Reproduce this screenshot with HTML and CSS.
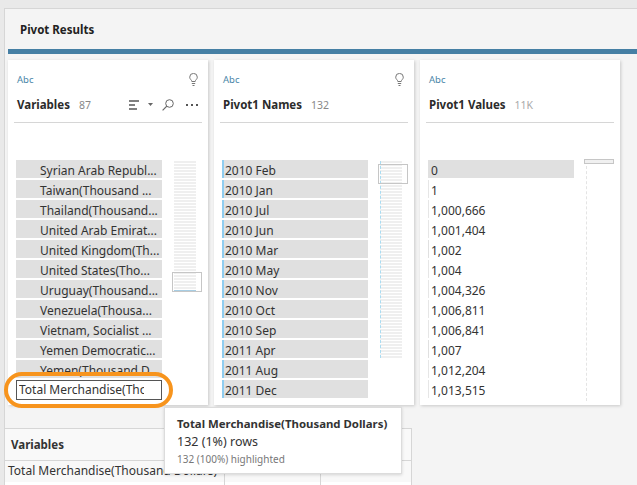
FILE: index.html
```html
<!DOCTYPE html>
<html lang="en">
<head>
    <meta charset="UTF-8">
    <title>Pivot Results</title>
    <link rel="stylesheet" href="styles.css">
</head>
<body>
    <div class="panel">
        <h1 class="panel-title">Pivot Results</h1>
        <div class="accent-bar"></div>
        <div class="cards">
            <div class="card">
                <div class="type-row">
                    <span class="type">Abc</span>
                    <svg class="bulb" width="9" height="13" viewBox="0 0 9 13"><path d="M2.800 8.500C2.800 7 .7 6.200 .7 4.200A3.800 3.800 0 0 1 8.300 4.200C8.300 6.200 6.200 7 6.200 8.500ZM2.800 10.500H6.200M3.500 12.500H5.500" fill="none" stroke="#777" stroke-width="1"/></svg>
                </div>
                <div class="name-row">
                    <span class="field-name">Variables</span>
                    <span class="count">87</span>
                    <span class="tools">
                        <svg width="10" height="10" viewBox="0 0 10 10"><path d="M0 1h10M0 5h6M0 9h8" stroke="#555" stroke-width="1.600"/></svg>
                        <svg class="caret" width="5" height="3" viewBox="0 0 5 3"><path d="M0 0h5L2.500 3z" fill="#666"/></svg>
                        <svg class="glass" width="12" height="12" viewBox="0 0 12 12"><circle cx="7.500" cy="4.500" r="3.800" fill="none" stroke="#666"/><path d="M4.800 7.200L.6 11.400" stroke="#666" stroke-width="1.200"/></svg>
                        <svg class="dots" width="12" height="2" viewBox="0 0 12 2"><path d="M0 0h2v2H0zM5 0h2v2H5zM10 0h2v2h-2z" fill="#555"/></svg>
                    </span>
                </div>
                <div class="profile">
                    <div class="rows indented">
                        <div class="row">Syrian Arab Republ...</div>
                        <div class="row">Taiwan(Thousand ...</div>
                        <div class="row">Thailand(Thousand...</div>
                        <div class="row">United Arab Emirat...</div>
                        <div class="row">United Kingdom(Th...</div>
                        <div class="row">United States(Tho...</div>
                        <div class="row">Uruguay(Thousand...</div>
                        <div class="row">Venezuela(Thousa...</div>
                        <div class="row">Vietnam, Socialist ...</div>
                        <div class="row">Yemen Democratic...</div>
                        <div class="row">Yemen(Thousand D...</div>
                    </div>
                    <div class="minimap minimap-first">
                        <div class="viewport viewport-first"></div>
                    </div>
                </div>
            </div>
            <div class="card">
                <div class="type-row">
                    <span class="type">Abc</span>
                    <svg class="bulb" width="9" height="13" viewBox="0 0 9 13"><path d="M2.800 8.500C2.800 7 .7 6.200 .7 4.200A3.800 3.800 0 0 1 8.300 4.200C8.300 6.200 6.200 7 6.200 8.500ZM2.800 10.500H6.200M3.500 12.500H5.500" fill="none" stroke="#777" stroke-width="1"/></svg>
                </div>
                <div class="name-row">
                    <span class="field-name">Pivot1 Names</span>
                    <span class="count">132</span>
                </div>
                <div class="profile">
                    <div class="rows marked">
                        <div class="row">2010 Feb</div>
                        <div class="row">2010 Jan</div>
                        <div class="row">2010 Jul</div>
                        <div class="row">2010 Jun</div>
                        <div class="row">2010 Mar</div>
                        <div class="row">2010 May</div>
                        <div class="row">2010 Nov</div>
                        <div class="row">2010 Oct</div>
                        <div class="row">2010 Sep</div>
                        <div class="row">2011 Apr</div>
                        <div class="row">2011 Aug</div>
                        <div class="row">2011 Dec</div>
                    </div>
                    <div class="minimap minimap-second">
                        <div class="viewport viewport-second"></div>
                    </div>
                </div>
            </div>
            <div class="card">
                <div class="type-row">
                    <span class="type">Abc</span>
                </div>
                <div class="name-row">
                    <span class="field-name">Pivot1 Values</span>
                    <span class="count count-light">11K</span>
                </div>
                <div class="profile">
                    <div class="rows plain">
                        <div class="row row-filled">0</div>
                        <div class="row">1</div>
                        <div class="row">1,000,666</div>
                        <div class="row">1,001,404</div>
                        <div class="row row-tint">1,002</div>
                        <div class="row">1,004</div>
                        <div class="row">1,004,326</div>
                        <div class="row">1,006,811</div>
                        <div class="row">1,006,841</div>
                        <div class="row row-tint">1,007</div>
                        <div class="row">1,012,204</div>
                        <div class="row">1,013,515</div>
                    </div>
                    <div class="minimap minimap-third">
                        <div class="viewport viewport-third"></div>
                    </div>
                </div>
            </div>
        </div>
        <div class="grid">
            <div class="grid-head">
                <div class="cell cell-wide">Variables</div>
                <div class="cell cell-mid"></div>
                <div class="cell cell-last"></div>
            </div>
            <div class="grid-row">
                <div class="cell cell-wide">Total Merchandise(Thousand Dollars)</div>
                <div class="cell cell-mid"></div>
                <div class="cell cell-last"></div>
            </div>
            <div class="grid-rest">
                <div class="cell cell-wide"></div>
                <div class="cell cell-mid"></div>
                <div class="cell cell-last"></div>
            </div>
        </div>
    </div>

    <div class="ring"></div>
    <div class="edit-box"><span class="edit-text">Total Merchandise(Thousand Dollars)</span></div>

    <div class="tooltip">
        <div class="tip-title">Total Merchandise(Thousand Dollars)</div>
        <div class="tip-rows">132 (1%) rows</div>
        <div class="tip-note">132 (100%) highlighted</div>
    </div>
</body>
</html>
```

FILE: styles.css
```css
* {
    box-sizing: border-box;
}
html, body {
    margin: 0;
    height: 485px;
    overflow: hidden;
}
body {
    position: relative;
    padding: 8px 0 0 4px;
    background-color: #e9e9e9;
    font-family: "Noto Sans", "Open Sans", sans-serif;
    color: #333;
}
.panel {
    height: 477px;
    padding-left: 3px;
    background-color: #f4f4f4;
    border: 1px solid #d6d6d6;
    border-right: none;
    border-bottom: none;
    overflow: hidden;
}
.panel-title {
    margin: 0;
    height: 40px;
    padding: 12px 0 0 12px;
    font-size: 11.5px;
    line-height: 18px;
    font-weight: 700;
    color: #222;
}
.accent-bar {
    height: 5px;
    background-color: #457fa4;
}
.cards {
    display: flex;
    gap: 6px;
    margin-top: 6px;
    height: 345px;
}
.card {
    flex: 0 0 200px;
    padding: 0 6px;
    background-color: #fff;
    box-shadow: 1px 1px 3px rgba(0, 0, 0, 0.18);
}
.type-row {
    display: flex;
    justify-content: space-between;
    align-items: center;
    height: 33px;
    padding: 5px 4px 0 3px;
}
.type {
    font-size: 9.5px;
    color: #4a86a8;
}
.name-row {
    display: flex;
    align-items: center;
    height: 23px;
    padding-left: 3px;
}
.field-name {
    font-size: 11.5px;
    font-weight: 700;
    color: #2b2b2b;
}
.count {
    margin-left: 9px;
    font-size: 10.5px;
    color: #888;
}
.count-light {
    color: #aaa;
}
.tools {
    display: flex;
    align-items: center;
    margin-left: auto;
    margin-right: 4px;
}
.caret {
    margin-left: 9px;
}
.glass {
    margin-left: 9px;
}
.dots {
    margin-left: 12px;
}
.profile {
    display: flex;
    align-items: flex-start;
    height: 283px;
    margin-top: 6px;
    padding-top: 37px;
    border-top: 1px solid #d6d6d6;
    overflow: hidden;
}
.rows {
    flex: 0 0 146px;
    margin-left: 2px;
}
.row {
    height: 18px;
    margin-bottom: 2px;
    padding-top: 1px;
    background-color: #e0e0e0;
    font-size: 12px;
    line-height: 19px;
    white-space: nowrap;
    overflow: hidden;
}
.indented .row {
    padding-left: 24px;
}
.marked .row {
    padding-left: 1px;
    border-left: 2px solid #8fcdf0;
}
.plain .row {
    padding-left: 2px;
    background-color: transparent;
    border-left: 1px solid #e6e6e6;
}
.plain .row-filled {
    background-color: #e0e0e0;
    border-left-color: #e0e0e0;
}
.plain .row-tint {
    border-left-color: #e0e0e0;
}
.minimap {
    position: relative;
    flex: 0 0 22px;
    margin: 1px 0 0 12px;
    height: 197px;
    background-image: repeating-linear-gradient(#efefef 0, #efefef 2px, #fff 2px, #fff 3px);
}
.minimap-first {
    height: 131px;
    border-bottom: 2px solid #a7cde3;
}
.minimap-second {
    border-left: 1px dashed #a9dcf2;
}
.minimap-third {
    flex-basis: 1px;
    height: 240px;
    background-image: none;
    border-left: 1px dashed #e4e4e4;
}
.viewport {
    position: absolute;
    border: 1px solid #c6c6c6;
}
.viewport-first {
    left: -2px;
    top: 111px;
    width: 30px;
    height: 20px;
}
.viewport-second {
    left: -3px;
    top: 3px;
    width: 30px;
    height: 20px;
}
.viewport-third {
    left: -3px;
    top: -2px;
    width: 30px;
    height: 5px;
    background-color: #f0f0f0;
}
.grid {
    margin: 23px 0 0 -3px;
    width: 407px;
    border-top: 1px solid #d6d6d6;
    background-color: #fff;
}
.grid-head,
.grid-row,
.grid-rest {
    display: flex;
}
.grid-head {
    height: 32px;
    background-color: #f9f9f9;
    border-bottom: 1px solid #d6d6d6;
}
.grid-row {
    height: 21px;
    background-color: #f8f8f8;
}
.grid-rest {
    height: 6px;
}
.cell {
    border-right: 1px solid #d6d6d6;
    white-space: nowrap;
    overflow: hidden;
}
.cell-wide {
    flex: 0 0 220px;
}
.cell-mid {
    flex: 0 0 96px;
}
.cell-last {
    flex: 0 0 91px;
}
.grid-head .cell-wide {
    padding: 8px 0 0 6px;
    font-size: 11.5px;
    font-weight: 700;
}
.grid-row .cell-wide {
    padding-left: 3px;
    font-size: 12px;
    line-height: 19px;
}
.ring {
    position: absolute;
    left: 4px;
    top: 372px;
    width: 169px;
    height: 36px;
    border: 4px solid #f7941d;
    border-radius: 18px;
}
.edit-box {
    position: absolute;
    left: 16px;
    top: 380px;
    width: 146px;
    height: 20px;
    padding-left: 2px;
    background-color: #fff;
    border: 1px solid #555;
    font-size: 12px;
    line-height: 18px;
    overflow: hidden;
}
.edit-text {
    display: block;
    width: 125px;
    white-space: nowrap;
    overflow: hidden;
}
.tooltip {
    position: absolute;
    left: 164px;
    top: 407px;
    width: 238px;
    height: 67px;
    padding: 8px 12px;
    background-color: #fff;
    border: 1px solid #dcdcdc;
    box-shadow: 0 1px 3px rgba(0, 0, 0, 0.15);
}
.tip-title {
    font-size: 11.4px;
    line-height: 16px;
    font-weight: 700;
}
.tip-rows {
    font-size: 12.5px;
    line-height: 19px;
}
.tip-note {
    font-size: 10px;
    line-height: 16px;
    color: #777;
}
```
